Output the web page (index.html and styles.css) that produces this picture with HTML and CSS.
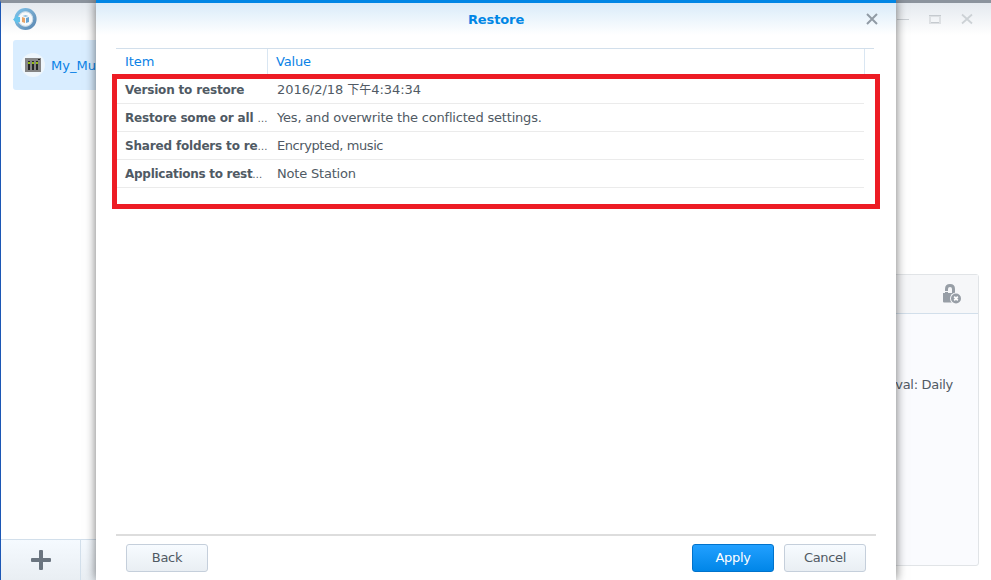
FILE: index.html
```html
<!DOCTYPE html>
<html lang="en">
<head>
<meta charset="utf-8">
<title>Restore</title>
<link rel="stylesheet" href="styles.css">
</head>
<body>
<div class="app">
  <header class="app-bar">
    <svg class="logo" width="26" height="26" viewBox="0 0 26 26">
      <defs><linearGradient id="ring" x1="0" y1="0" x2="1" y2="1"><stop offset="0" stop-color="#79bfe8"/><stop offset=".5" stop-color="#75a7cc"/><stop offset="1" stop-color="#5b89b4"/></linearGradient></defs>
      <circle cx="13.5" cy="13" r="9.3" fill="#f8fafb" stroke="url(#ring)" stroke-width="3.6"/>
      <circle cx="13.5" cy="13" r="7.3" fill="none" stroke="#c5d6e3" stroke-width="1"/>
      <path d="M1 13.5 6 8.5v2.5h2v5H6v2.5z" fill="#62c1ea"/>
      <path d="M10 11l3 1v5l-3-1z" fill="#e9a467"/>
      <path d="M14 12l3-1v5l-3 1z" fill="#6aa5d2"/>
      <path d="M10.5 10l3-1 3 1-3 1z" fill="#8fbfe0"/>
    </svg>
    <svg class="controls" width="84" height="16" viewBox="0 0 84 16" fill="none">
      <path d="M4 8.5h12" stroke="#c9ced3"/>
      <path d="M37 5h10v7H37z" stroke="#dde0e3" stroke-width="2"/><path d="M36 4.5h12M38 11.5h8" stroke="#c5cacf"/>
      <path d="M69 3.5l10 9M79 3.5l-10 9" stroke="#cdd2d6" stroke-width="1.8"/>
    </svg>
  </header>
  <div class="app-body">
    <nav class="sidebar">
      <div class="task">
        <svg width="24" height="24" viewBox="0 0 24 24">
          <circle cx="12" cy="12" r="12" fill="#eef6fc"/>
          <path d="M4 5h16v14H4z" fill="#858585"/>
          <path d="M7 8h2v9H7zM11 8h2v9h-2zM15 8h2v9h-2zM17 6h2v1h-2z" fill="#262626"/>
          <path d="M7 9h2v2H7zM11 9h2v2h-2zM15 9h2v2h-2z" fill="#91b913"/>
        </svg>
        <span>My_Music</span>
      </div>
      <div class="toolbar">
        <div class="add"><svg width="20" height="20" viewBox="0 0 20 20"><path d="M8 1q0-1 1-1h2q1 0 1 1v7h7q1 0 1 1v2q0 1-1 1h-7v7q0 1-1 1H9q-1 0-1-1v-7H1q-1 0-1-1V9q0-1 1-1h7z" fill="#6b7580"/></svg></div>
      </div>
    </nav>
    <main class="content">
      <section class="card">
        <div class="card-head">
          <svg width="20" height="20" viewBox="0 0 20 20">
            <path d="M4.5 10V5q0-3.500 3.500-3.500T11.500 5v4" fill="none" stroke="#979ea6" stroke-width="3"/>
            <path d="M1 9h12v9.500H2q-1 0-1-1z" fill="#979ea6"/>
            <circle cx="14" cy="14.500" r="6" fill="#f6f7f9"/><circle cx="14" cy="14.500" r="5" fill="#979ea6"/>
            <path d="M12.200 12.700l3.600 3.600M15.800 12.700l-3.600 3.600" stroke="#fff" stroke-width="1.7"/>
            <path d="M2.500 7h4v1h-4z" fill="#f6f7f9"/>
          </svg>
        </div>
        <p class="interval">Interval: Daily</p>
      </section>
    </main>
  </div>
</div>

<div class="dialog">
  <header class="dialog-head">
    <h1>Restore</h1>
    <svg class="close" width="12" height="12" viewBox="0 0 12 12"><path d="M1 1l10 10M11 1L1 11" stroke="#919ba5" stroke-width="2"/></svg>
  </header>
  <div class="grid">
    <div class="grid-head"><span class="item">Item</span><span class="value">Value</span></div>
    <div class="rows">
      <div class="row"><span class="item">Version to restore</span><span class="value date">2016/2/18 <span class="cjk">下午</span>4:34:34</span></div>
      <div class="row"><span class="item">Restore some or all <i>…</i></span><span class="value">Yes, and overwrite the conflicted settings.</span></div>
      <div class="row"><span class="item">Shared folders to re<i>…</i></span><span class="value folders">Encrypted, music</span></div>
      <div class="row"><span class="item apps">Applications to rest<i>…</i></span><span class="value">Note Station</span></div>
    </div>
  </div>
  <footer class="actions">
    <button class="back">Back</button>
    <button class="apply">Apply</button>
    <button>Cancel</button>
  </footer>
  <div class="highlight"></div>
</div>
</body>
</html>
```
FILE: styles.css
```css
* { box-sizing: border-box; }
body {
  margin: 0;
  width: 991px;
  height: 580px;
  position: relative;
  overflow: hidden;
  font: 13px/18px Verdana, "DejaVu Sans", "Noto Sans CJK TC", sans-serif;
  color: #505a64;
  background: #fff;
}
svg { display: block; flex: none; }
.app {
  height: 580px;
  border-left: 1px solid #1c57b5;
  border-top: 3px solid #8b939d;
  display: flex;
  flex-direction: column;
}
.app-bar {
  height: 32px;
  flex: none;
  display: flex;
  justify-content: space-between;
  padding: 3px 15px 0 11px;
  background: linear-gradient(#e4e9ef, #fff);
}
.controls { margin-top: 5px; margin-right: -1px; }
.app-body { flex: 1; display: flex; }
.sidebar { width: 200px; display: flex; flex-direction: column; justify-content: space-between; }
.task {
  margin: 5px 0 0 12px;
  height: 50px;
  padding-left: 8px;
  display: flex;
  align-items: center;
  gap: 6px;
  border-radius: 3px;
  background: #d9edff;
  color: #0a82e6;
}
.task span { padding-top: 1px; }
.toolbar {
  height: 41px;
  border-top: 1px solid #d2dfeb;
  background: linear-gradient(#f5faff, #e9eef3);
  display: flex;
}
.add { width: 80px; border-right: 1px solid #d2dfeb; display: flex; align-items: center; justify-content: center; }
.content { flex: 1; padding: 239px 12px 14px 20px; display: flex; }
.card { flex: 1; border: 1px solid #e1e4e7; border-radius: 3px; background: #fafbfe; }
.card-head {
  height: 39px;
  display: flex;
  align-items: center;
  justify-content: flex-end;
  padding-right: 16px;
  background: #f6f7f9;
  border-bottom: 1px solid #d2dfeb;
}
.interval { margin: 62px 25px 0 0; text-align: right; letter-spacing: -.3px; }
.dialog {
  position: absolute;
  left: 96px;
  top: 0;
  width: 800px;
  height: 580px;
  border-top: 3px solid #0086e5;
  background: #fff;
  box-shadow: 0 0 10px rgba(0, 0, 0, .55);
  display: flex;
  flex-direction: column;
}
.dialog-head {
  height: 32px;
  background: linear-gradient(#d9ebf9, #fff);
  display: flex;
  align-items: center;
  padding-right: 18px;
}
h1 { flex: 1; margin: 1px 0 0 30px; text-align: center; font-size: 13px; line-height: 18px; letter-spacing: -.1px; color: #0086e5; }
.grid { flex: 1; margin: 13px 22px 0 20px; border-top: 1px solid #d2dfeb; }
.grid-head { display: flex; width: 749px; height: 27px; border-right: 1px solid #d9e6f2; color: #0a82e6; }
.grid-head span { line-height: 25px; }
.item { width: 152px; padding-left: 9px; white-space: nowrap; flex: none; }
.grid-head .item { border-right: 1px solid #d9e6f2; letter-spacing: -.1px; }
.grid-head .value { padding-left: 8px; letter-spacing: -.15px; }
.rows { width: 748px; }
.row { display: flex; height: 28px; line-height: 27px; border-bottom: 1px solid #ebebeb; }
.row .item { font-weight: bold; font-size: 12px; line-height: 29px; letter-spacing: -.17px; }
.row .item.apps { letter-spacing: -.28px; }
.row .value { padding-left: 9px; white-space: nowrap; letter-spacing: -.19px; }
.row .value.date { letter-spacing: -.05px; }
.row .value.folders { letter-spacing: -.43px; }
.item i { font-style: normal; font-weight: normal; font-size: 10px; letter-spacing: 0; }
.cjk { font: 12px "Noto Sans CJK TC", sans-serif; line-height: 1; }
.actions {
  height: 46px;
  margin: 0 20px;
  padding: 8px 10px 0;
  border-top: 2px solid #ddd;
  display: flex;
  gap: 10px;
}
button {
  width: 82px;
  height: 28px;
  padding: 0;
  border: 1px solid #c5cfdb;
  border-radius: 3px;
  background: linear-gradient(#f7fbff, #e9eef3);
  color: #505a64;
  font: inherit;
  letter-spacing: -.3px;
}
.back { margin-right: auto; }
.apply { border-color: #0073cc; background: linear-gradient(#22a0ff, #0086e8); color: #fff; }
.highlight { position: absolute; left: 16px; top: 71px; width: 768px; height: 135px; border: 5px solid #ed1c24; }
```
